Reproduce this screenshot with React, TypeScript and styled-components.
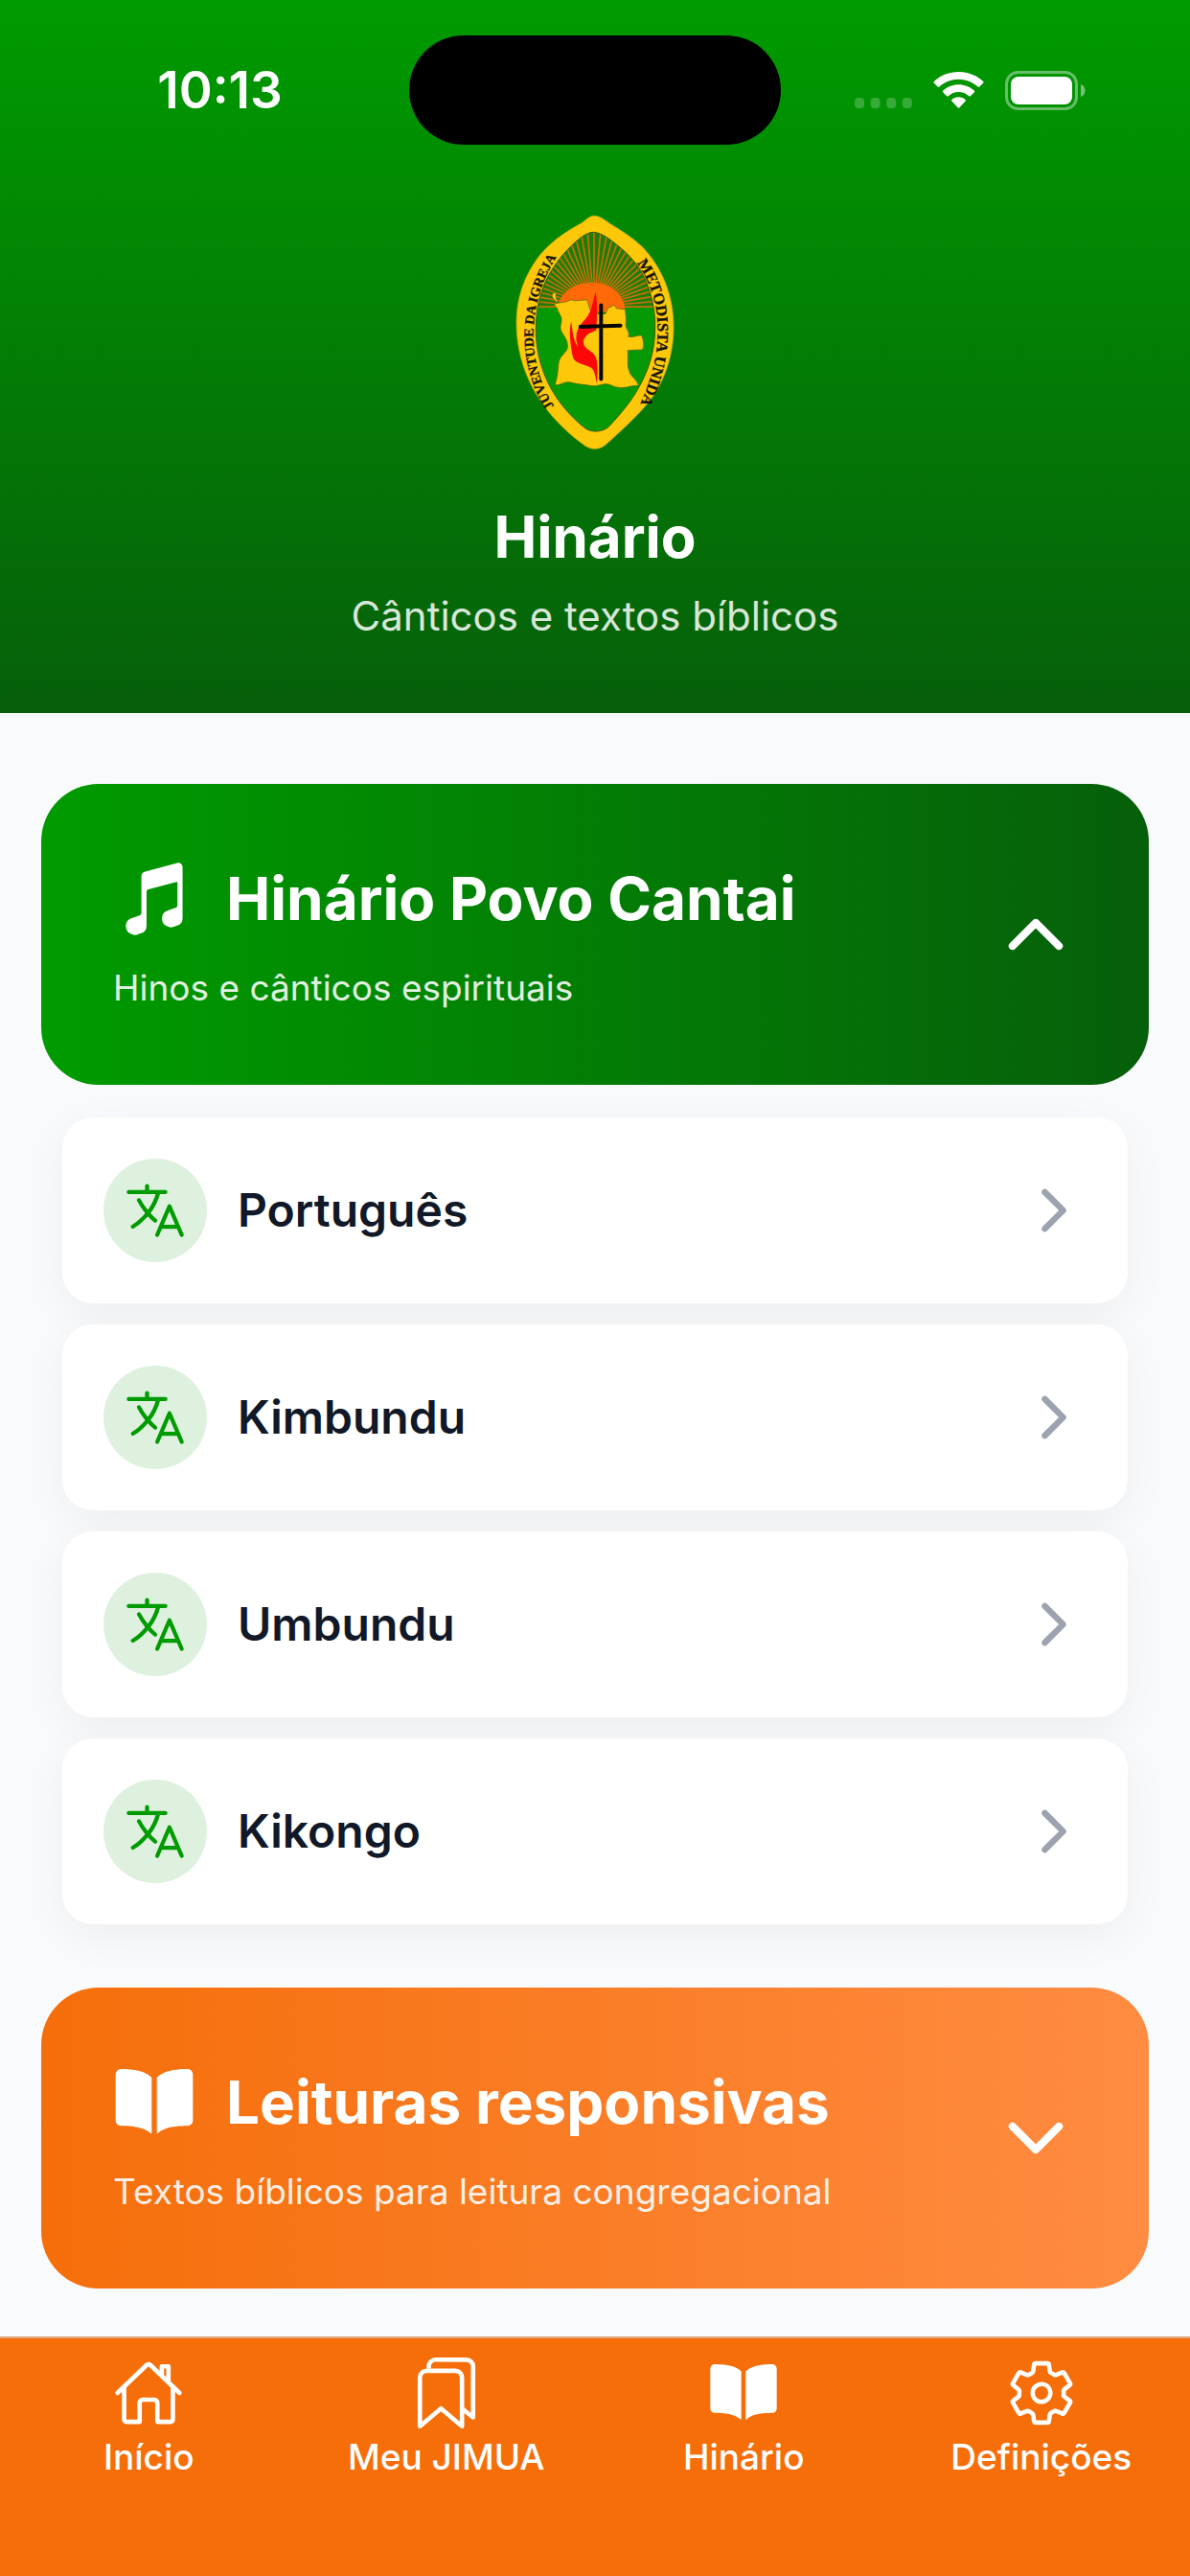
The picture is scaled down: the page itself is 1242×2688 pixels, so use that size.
import React, { useState } from "react";
import styled, { createGlobalStyle } from "styled-components";
import {
  IoBook,
  IoBookmarksOutline,
  IoChevronDown,
  IoChevronForward,
  IoChevronUp,
  IoHomeOutline,
  IoLanguageOutline,
  IoMusicalNotes,
  IoSettingsOutline,
} from "react-icons/io5";

const GlobalStyle = createGlobalStyle`
  *, *::before, *::after { box-sizing: border-box; }
  body {
    margin: 0;
    background: #f9fafc;
    font-family: Inter, "Liberation Sans", sans-serif;
  }
  svg { display: block; flex-shrink: 0; }
`;

const Screen = styled.div`
  display: flex;
  flex-direction: column;
  min-height: 100vh;
`;

const Header = styled.header`
  display: flex;
  flex-direction: column;
  align-items: center;
  padding-bottom: 74px;
  background: linear-gradient(180deg, #009b00 0%, #065f0a 100%);
  color: #ffffff;
`;

const StatusBar = styled.div`
  display: grid;
  grid-template-columns: 1fr 388px 1fr;
  align-items: center;
  align-self: stretch;
  padding-top: 37px;
`;

const Time = styled.time`
  padding-left: 32px;
  text-align: center;
  font-size: 53px;
  line-height: 60px;
  font-weight: 600;
`;

const Island = styled.div`
  height: 114px;
  border-radius: 57px;
  background: #000000;
`;

const StatusIcons = styled.div`
  display: flex;
  align-items: center;
  justify-content: flex-end;
  gap: 22px;
  padding-right: 109px;
`;

const Emblem = styled.svg`
  width: 166px;
  height: 246px;
  margin: 73px 0 54px;
`;

const PageTitle = styled.h1`
  margin: 0 0 20px;
  font-size: 60px;
  line-height: 72px;
  font-weight: 700;
`;

const PageSubtitle = styled.p`
  margin: 0;
  font-size: 42px;
  line-height: 54px;
  color: rgba(255, 255, 255, 0.85);
`;

const Main = styled.main`
  display: flex;
  flex: 1;
  flex-direction: column;
  gap: 66px;
  padding: 74px 43px 50px;
`;

const Section = styled.section`
  display: flex;
  flex-direction: column;
  gap: 34px;
`;

const SectionButton = styled.button<{ $from: string; $to: string }>`
  display: flex;
  align-items: center;
  justify-content: space-between;
  width: 100%;
  padding: 75px;
  border: 0;
  border-radius: 60px;
  background: linear-gradient(90deg, ${(p) => p.$from}, ${(p) => p.$to});
  color: #ffffff;
  font-family: inherit;
  text-align: left;
  cursor: pointer;
`;

const SectionText = styled.span`
  display: flex;
  flex-direction: column;
  gap: 22px;
`;

const SectionHeading = styled.span`
  display: flex;
  align-items: center;
  gap: 32px;
  font-size: 62px;
  line-height: 90px;
  font-weight: 700;
`;

const SectionNote = styled.span`
  font-size: 37px;
  line-height: 52px;
  color: rgba(255, 255, 255, 0.9);
`;

const LanguageList = styled.ul`
  display: flex;
  flex-direction: column;
  gap: 22px;
  margin: 0;
  padding: 0 22px;
  list-style: none;
`;

const LanguageLink = styled.a`
  display: flex;
  align-items: center;
  gap: 32px;
  padding: 43px;
  border-radius: 32px;
  background: #ffffff;
  box-shadow: 0 12px 46px rgba(0, 0, 0, 0.05);
  color: #111827;
  font-size: 48px;
  line-height: 60px;
  font-weight: 600;
  text-decoration: none;
`;

const LanguageBadge = styled.span`
  display: grid;
  place-items: center;
  width: 108px;
  height: 108px;
  border-radius: 50%;
  background: #def1df;
  color: #009b00;
`;

const LanguageName = styled.span`
  flex: 1;
`;

const TabBar = styled.nav`
  display: grid;
  grid-template-columns: repeat(4, 1fr);
  padding: 20px 0 102px;
  border-top: 2px solid #dfa981;
  background: #f56e0a;
`;

const Tab = styled.a`
  display: flex;
  flex-direction: column;
  align-items: center;
  gap: 8px;
  color: #ffffff;
  font-size: 37px;
  line-height: 44px;
  font-weight: 500;
  text-decoration: none;
`;

function SignalDots() {
  return (
    <svg width="60" height="40" viewBox="0 0 60 40" fill="#ffffff" fillOpacity="0.22" aria-hidden="true">
      {[0, 16.6, 33.2, 49.8].map((x) => (
        <rect key={x} x={x} y="28" width="10" height="11" rx="4" />
      ))}
    </svg>
  );
}

function Wifi() {
  return (
    <svg width="53" height="40" viewBox="0 0 53 40" fill="#ffffff" aria-hidden="true">
      <path d="M26.5 1C16.700 1 7.400 4.700 .8 10.900c-.5.500-.5 1.200 0 1.700l3.900 4c.5.500 1.200.500 1.700 0C11.700 11.600 18.900 8.700 26.500 8.700s14.800 2.900 20.100 7.900c.5.500 1.200.500 1.700 0l3.900-4c.5-.5.500-1.200 0-1.700C45.600 4.700 36.300 1 26.500 1z" />
      <path d="M26.500 14.200c-6.200 0-12 2.400-16.300 6.300-.5.500-.5 1.200 0 1.700l3.900 4c.5.400 1.100.500 1.600 0 3-2.700 6.800-4.200 10.800-4.200s7.800 1.500 10.800 4.200c.5.500 1.100.4 1.600 0l3.900-4c.5-.5.500-1.200 0-1.700-4.300-3.900-10.100-6.300-16.300-6.300z" />
      <path d="M26.500 27.300c-2.700 0-5.200 1-7.100 2.600-.5.400-.5 1.100 0 1.600l6.200 6.800c.5.500 1.300.500 1.800 0l6.200-6.800c.5-.5.500-1.200 0-1.600-1.900-1.600-4.400-2.600-7.100-2.600z" />
    </svg>
  );
}

function Battery() {
  return (
    <svg width="84" height="41" viewBox="0 0 84 41" aria-hidden="true">
      <rect x="1.500" y="1.500" width="73" height="38" rx="12" fill="none" stroke="#ffffff" strokeOpacity="0.4" strokeWidth="3" />
      <rect x="6" y="6" width="64" height="29" rx="8" fill="#ffffff" />
      <path d="M79 14c3 1 4.500 3.500 4.500 6.500S82 26 79 27z" fill="#ffffff" fillOpacity="0.45" />
    </svg>
  );
}

const INNER =
  "M303 94C325 98 345 112 365 128C400 155 430 185 450 220C477 270 492 330 492 390C492 470 470 535 430 600C405 640 370 680 345 706C325 722 295 724 274 711C240 685 205 648 180 610C140 550 117 475 117 400C117 325 135 260 172 205C198 165 230 132 262 108C275 99 290 92 303 94Z";

function Logo() {
  const rays = Array.from({ length: 37 }, (_, i) => (i * 5 * Math.PI) / 180);
  return (
    <Emblem viewBox="53 39 500 740" role="img" aria-label="Juventude da Igreja Metodista Unida">
      <defs>
        <clipPath id="field">
          <path d={INNER} />
        </clipPath>
        <path id="leftArc" d="M174 640C84 500 84 310 196 150" />
        <path id="rightArc" d="M434 190C521 310 527 484 424 676" />
      </defs>
      <path
        fill="#fdc80a"
        stroke="#c9b00a"
        strokeWidth="2"
        d="M300 42C318 42 335 56 352 68C385 88 420 110 450 138C515 205 550 295 550 390C550 480 522 565 470 630C438 668 395 710 345 754C322 778 296 780 272 765C225 732 175 685 140 635C85 560 56 470 56 380C56 300 80 230 130 165C170 118 215 90 262 64C275 54 286 42 300 42Z"
      />
      <path d={INNER} fill="#059a05" />
      <g clipPath="url(#field)">
        <path d="M100 95H500V330H100Z" fill="#1d7d04" />
        {rays.map((a) => (
          <line
            key={a}
            x1="300"
            y1="328"
            x2={300 + Math.cos(a) * 260}
            y2={328 - Math.sin(a) * 260}
            stroke="#c9700a"
            strokeWidth="5"
          />
        ))}
        <path d="M186 330C194 280 240 252 293 252C345 252 388 280 396 330V345H186Z" fill="#ff6a08" />
      </g>
      <path d={INNER} fill="none" stroke="#3d5a08" strokeWidth="3" />
      <path
        fill="#fdc80a"
        stroke="#5c5a0c"
        strokeWidth="2"
        strokeLinejoin="round"
        d="M182 283C168 282 164 292 172 302C178 308 180 314 187 316L174 320L184 333L192 352C206 370 190 385 196 402C204 420 218 430 217 455C214 475 190 480 188 510C186 540 182 560 177 573C195 577 205 560 228 566C250 573 270 572 290 576C315 580 330 565 350 573C375 585 395 584 415 578L440 575C432 552 412 545 411 530C403 515 408 490 406 465L450 463C460 455 454 440 454 432L450 418C435 416 425 426 408 422C414 405 398 398 400 382C403 365 398 350 398 336L370 333L366 324C355 322 355 332 344 331L336 350L292 350L278 306L240 309L228 306L214 312L187 316C184 305 176 296 182 283Z"
      />
      <path
        fill="#fb0707"
        d="M305 280C312 330 309 370 307 402C290 408 270 415 266 438C270 470 304 460 309 500C312 525 311 548 309 570C302 540 303 525 285 517C255 505 236 505 232 480C226 445 220 405 228 375C233 400 232 430 250 455C236 420 248 395 265 375C292 350 294 320 305 280Z"
      />
      <path d="M322 323V555M257 391L383 387" stroke="#050505" strokeWidth="12" strokeLinecap="round" />
      <g
        fill="#16140a"
        stroke="#16140a"
        strokeWidth="1"
        fontFamily="'Liberation Serif', serif"
        fontWeight="700"
      >
        <text fontSize="42">
          <textPath href="#leftArc">JUVENTUDE DA IGREJA</textPath>
        </text>
        <text fontSize="49">
          <textPath href="#rightArc">METODISTA UNIDA</textPath>
        </text>
      </g>
    </Emblem>
  );
}

const LANGUAGES = ["Português", "Kimbundu", "Umbundu", "Kikongo"];

const TABS = [
  { label: "Início", Icon: IoHomeOutline },
  { label: "Meu JIMUA", Icon: IoBookmarksOutline },
  { label: "Hinário", Icon: IoBook },
  { label: "Definições", Icon: IoSettingsOutline },
];

export default function App() {
  const [hymnsOpen, setHymnsOpen] = useState(true);
  const [readingsOpen, setReadingsOpen] = useState(false);

  return (
    <Screen>
      <GlobalStyle />
      <Header>
        <StatusBar>
          <Time>10:13</Time>
          <Island />
          <StatusIcons>
            <SignalDots />
            <Wifi />
            <Battery />
          </StatusIcons>
        </StatusBar>
        <Logo />
        <PageTitle>Hinário</PageTitle>
        <PageSubtitle>Cânticos e textos bíblicos</PageSubtitle>
      </Header>

      <Main>
        <Section>
          <SectionButton
            type="button"
            $from="#009b00"
            $to="#065f0a"
            aria-expanded={hymnsOpen}
            onClick={() => setHymnsOpen(!hymnsOpen)}
          >
            <SectionText>
              <SectionHeading>
                <IoMusicalNotes size={86} />
                Hinário Povo Cantai
              </SectionHeading>
              <SectionNote>Hinos e cânticos espirituais</SectionNote>
            </SectionText>
            {hymnsOpen ? <IoChevronUp size={86} /> : <IoChevronDown size={86} />}
          </SectionButton>
          {hymnsOpen && (
            <LanguageList>
              {LANGUAGES.map((name) => (
                <li key={name}>
                  <LanguageLink href={`#${name.toLowerCase()}`}>
                    <LanguageBadge>
                      <IoLanguageOutline size={68} />
                    </LanguageBadge>
                    <LanguageName>{name}</LanguageName>
                    <IoChevronForward size={68} color="#9ca3af" />
                  </LanguageLink>
                </li>
              ))}
            </LanguageList>
          )}
        </Section>

        <Section>
          <SectionButton
            type="button"
            $from="#f56e0a"
            $to="#ff8c42"
            aria-expanded={readingsOpen}
            onClick={() => setReadingsOpen(!readingsOpen)}
          >
            <SectionText>
              <SectionHeading>
                <IoBook size={86} />
                Leituras responsivas
              </SectionHeading>
              <SectionNote>Textos bíblicos para leitura congregacional</SectionNote>
            </SectionText>
            {readingsOpen ? <IoChevronUp size={86} /> : <IoChevronDown size={86} />}
          </SectionButton>
        </Section>
      </Main>

      <TabBar>
        {TABS.map(({ label, Icon }) => (
          <Tab key={label} href="#" aria-current={label === "Hinário" ? "page" : undefined}>
            <Icon size={74} />
            {label}
          </Tab>
        ))}
      </TabBar>
    </Screen>
  );
}
